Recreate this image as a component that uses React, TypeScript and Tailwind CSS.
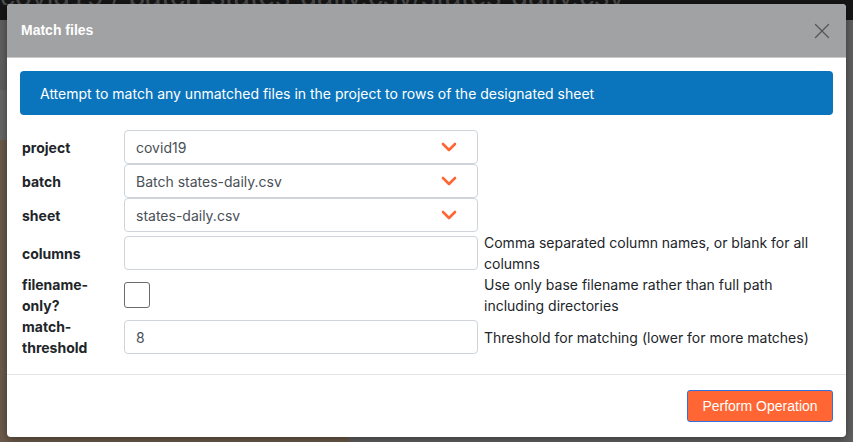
import { X } from "lucide-react";

type Row = {
  label: string[];
  kind: "select" | "input" | "checkbox";
  value?: string;
  help?: string[];
};

const ROWS: Row[] = [
  { label: ["project"], kind: "select", value: "covid19" },
  { label: ["batch"], kind: "select", value: "Batch states-daily.csv" },
  { label: ["sheet"], kind: "select", value: "states-daily.csv" },
  {
    label: ["columns"],
    kind: "input",
    value: "",
    help: ["Comma separated column names, or blank for all", "columns"],
  },
  {
    label: ["filename-", "only?"],
    kind: "checkbox",
    help: ["Use only base filename rather than full path", "including directories"],
  },
  {
    label: ["match-", "threshold"],
    kind: "input",
    value: "8",
    help: ["Threshold for matching (lower for more matches)"],
  },
];

const Chevron = () => (
  <svg className="w-[16px] h-[10px]" viewBox="0 0 16 10" fill="none">
    <path d="M2 2l6 6 6-6" stroke="#ff6633" strokeWidth={2.6} strokeLinecap="round" strokeLinejoin="round" />
  </svg>
);

const Field = ({ row }: { row: Row }) => {
  if (row.kind === "checkbox") {
    return (
      <div className="w-[354px] h-[42px] flex items-center">
        <div className="w-[26px] h-[26px] rounded-[3px] border border-[#6b6b6b] bg-white" />
      </div>
    );
  }
  return (
    <div className="w-[354px] h-[34px] flex items-center justify-between rounded-[4px] border border-[#ced4da] bg-white pl-[11px] pr-[20px] text-[14px] text-[#495057]">
      <span>{row.value}</span>
      {row.kind === "select" && <Chevron />}
    </div>
  );
};

const Backdrop = () => (
  <div className="absolute inset-0 bg-[#5f5f5f]">
    <div className="absolute left-0 top-0 w-full h-[20px] bg-[#161616]" />
    <div className="absolute left-0 top-0 w-[840px] h-[5px] overflow-hidden">
      <div className="mt-[-22px] text-[30px] leading-[36px] text-[#4a4a4a] whitespace-nowrap font-['Liberation_Sans',sans-serif]">
        covid19 / batch states-daily.csv/states-daily.csv
      </div>
    </div>
    <div className="absolute left-0 top-[140px] w-[350px] h-[302px] bg-[#6a5a49]" />
    <div className="absolute left-0 top-[90px] w-[10px] h-[50px] bg-[#666]" />
  </div>
);

export default function App() {
  return (
    <div className="relative w-[853px] h-[442px] overflow-hidden font-['Inter',sans-serif]">
      <Backdrop />
      <div className="absolute left-[7px] top-[4px] w-[839px] h-[433px] rounded-[4px] bg-white overflow-hidden shadow-[0_2px_8px_rgba(0,0,0,0.4)] flex flex-col">
        <div className="h-[54px] shrink-0 bg-[#a1a2a4] border-b border-[#c9cacc] flex items-center justify-between pl-[14px] pr-[11px]">
          <h5 className="text-white text-[14px] font-bold font-['Liberation_Sans',sans-serif]">Match files</h5>
          <X className="w-[26px] h-[26px] text-[#555]" strokeWidth={1.1} />
        </div>

        <div className="px-[13px] pt-[13px] flex-1">
          <div className="h-[44px] rounded-[4px] bg-[#0a75bc] text-white text-[14px] flex items-center pl-[20px]">
            Attempt to match any unmatched files in the project to rows of the designated sheet
          </div>

          <div className="mt-[15px] pl-[2px] flex flex-col">
            {ROWS.map((row) => (
              <div key={row.label.join("")} className="flex items-center">
                <div className="w-[102px] shrink-0 text-[14px] font-bold text-[#212529] leading-[21px]">
                  {row.label.map((l) => (
                    <div key={l}>{l}</div>
                  ))}
                </div>
                <Field row={row} />
                <div className="ml-[6px] text-[14px] text-[#212529] leading-[21px]">
                  {row.help?.map((h) => (
                    <div key={h}>{h}</div>
                  ))}
                </div>
              </div>
            ))}
          </div>
        </div>

        <div className="h-[63px] shrink-0 border-t border-[#e5e5e5] flex items-center justify-end pr-[13px]">
          <button
            type="button"
            className="h-[32px] w-[146px] rounded-[3px] border border-[#2f6fe0] bg-[#ff6633] text-white text-[14px] font-['Liberation_Sans',sans-serif]"
          >
            Perform Operation
          </button>
        </div>
      </div>
    </div>
  );
}
